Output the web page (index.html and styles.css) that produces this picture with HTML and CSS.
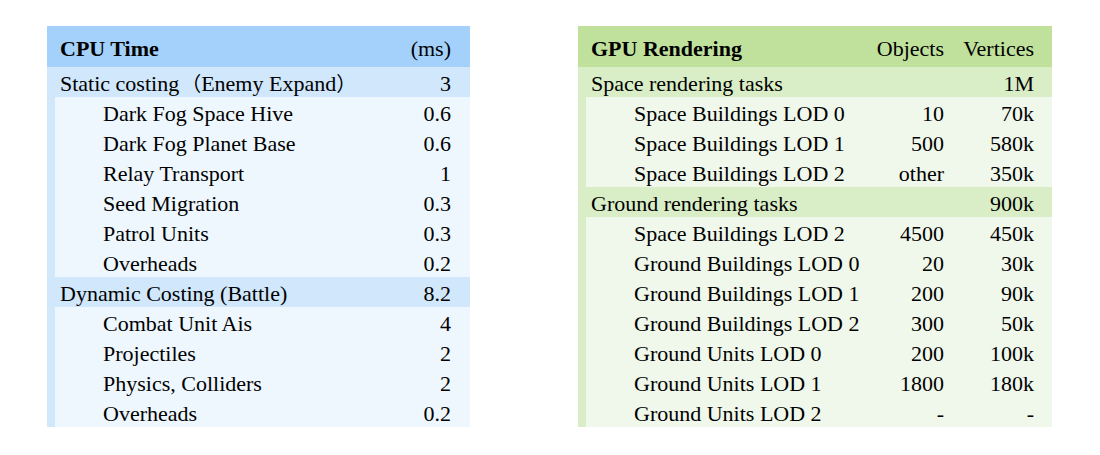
FILE: index.html
```html
<!DOCTYPE html>
<html>
<head>
<meta charset="utf-8">
<link rel="stylesheet" href="styles.css">
</head>
<body>
<div class="page">
  <div class="table cpu">
    <div class="row head"><span class="label bold">CPU Time</span><span class="num">(ms)</span></div>
    <div class="row sec"><span class="label">Static costing<span class="cjk open">（</span>Enemy Expand<span class="cjk close">）</span></span><span class="num">3</span></div>
    <div class="row sub"><span class="label">Dark Fog Space Hive</span><span class="num">0.6</span></div>
    <div class="row sub"><span class="label">Dark Fog Planet Base</span><span class="num">0.6</span></div>
    <div class="row sub"><span class="label">Relay Transport</span><span class="num">1</span></div>
    <div class="row sub"><span class="label">Seed Migration</span><span class="num">0.3</span></div>
    <div class="row sub"><span class="label">Patrol Units</span><span class="num">0.3</span></div>
    <div class="row sub"><span class="label">Overheads</span><span class="num">0.2</span></div>
    <div class="row sec"><span class="label">Dynamic Costing (Battle)</span><span class="num">8.2</span></div>
    <div class="row sub"><span class="label">Combat Unit Ais</span><span class="num">4</span></div>
    <div class="row sub"><span class="label">Projectiles</span><span class="num">2</span></div>
    <div class="row sub"><span class="label">Physics, Colliders</span><span class="num">2</span></div>
    <div class="row sub"><span class="label">Overheads</span><span class="num">0.2</span></div>
  </div>
  <div class="table gpu">
    <div class="row head"><span class="label bold">GPU Rendering</span><span class="num">Objects</span><span class="num">Vertices</span></div>
    <div class="row sec"><span class="label">Space rendering tasks</span><span class="num"></span><span class="num">1M</span></div>
    <div class="row sub"><span class="label">Space Buildings LOD 0</span><span class="num">10</span><span class="num">70k</span></div>
    <div class="row sub"><span class="label">Space Buildings LOD 1</span><span class="num">500</span><span class="num">580k</span></div>
    <div class="row sub"><span class="label">Space Buildings LOD 2</span><span class="num">other</span><span class="num">350k</span></div>
    <div class="row sec"><span class="label">Ground rendering tasks</span><span class="num"></span><span class="num">900k</span></div>
    <div class="row sub"><span class="label">Space Buildings LOD 2</span><span class="num">4500</span><span class="num">450k</span></div>
    <div class="row sub"><span class="label">Ground Buildings LOD 0</span><span class="num">20</span><span class="num">30k</span></div>
    <div class="row sub"><span class="label">Ground Buildings LOD 1</span><span class="num">200</span><span class="num">90k</span></div>
    <div class="row sub"><span class="label">Ground Buildings LOD 2</span><span class="num">300</span><span class="num">50k</span></div>
    <div class="row sub"><span class="label">Ground Units LOD 0</span><span class="num">200</span><span class="num">100k</span></div>
    <div class="row sub"><span class="label">Ground Units LOD 1</span><span class="num">1800</span><span class="num">180k</span></div>
    <div class="row sub"><span class="label">Ground Units LOD 2</span><span class="num">-</span><span class="num">-</span></div>
  </div>
</div>
</body>
</html>
```

FILE: styles.css
```css
html, body {
  margin: 0;
  padding: 0;
  background: #ffffff;
}
body {
  font-family: "Liberation Serif", "Noto Sans CJK SC", serif;
  font-size: 22px;
  color: #000000;
}
.page {
  display: flex;
  align-items: flex-start;
  gap: 108px;
  padding: 26px 0 0 47px;
}
.table {
  display: flex;
  flex-direction: column;
}
.cpu { width: 423px; background: #d0e7fc; }
.gpu { width: 474px; background: #d9eec6; }
.row {
  display: grid;
  align-items: center;
  height: 30px;
  padding: 3px 19px 0 13px;
  box-sizing: border-box;
  white-space: nowrap;
}
.cpu .row { grid-template-columns: 1fr auto; }
.gpu .row { grid-template-columns: 1fr 80px 90px; padding-right: 18px; }
.row.head { height: 41px; padding-top: 4px; }
.cpu .head { background: #a4d1fb; }
.gpu .head { background: #bfe19c; }
.row.sub {
  margin-left: 8px;
  padding-left: 48px;
}
.cpu .sub { background: #eef7fe; }
.gpu .sub { background: #f0f8eb; }
.num { text-align: right; }
.bold { font-weight: bold; }
.cjk {
  display: inline-block;
  width: 22px;
  font-family: "Noto Sans CJK SC", sans-serif;
  font-size: 20px;
  line-height: 1;
}
.open { text-align: right; }
.close { text-align: left; }
```
